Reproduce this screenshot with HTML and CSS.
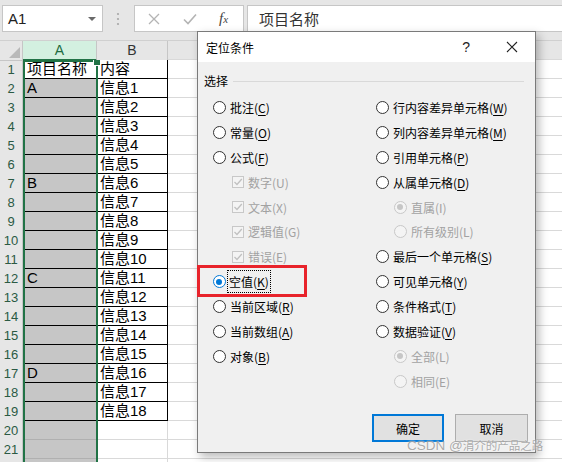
FILE: index.html
```html
<!DOCTYPE html>
<html lang="zh">
<head>
<meta charset="utf-8">
<link rel="stylesheet" href="styles.css">
</head>
<body>
<div class="app">
  <div class="topbar">
    <div class="namebox"><span class="nb-text">A1</span><span class="caret"></span></div>
    <svg class="dots" width="4" height="14" viewBox="0 0 4 14"><circle cx="2" cy="2" r="1.1" fill="#a8a8a8"/><circle cx="2" cy="7" r="1.1" fill="#a8a8a8"/><circle cx="2" cy="12" r="1.1" fill="#a8a8a8"/></svg>
    <div class="fxbtns">
      <svg class="ico" width="12" height="12" viewBox="0 0 12 12"><path d="M1 1 L11 11 M11 1 L1 11" stroke="#b4b4b4" stroke-width="1.3" fill="none"/></svg>
      <svg class="ico" width="14" height="12" viewBox="0 0 14 12"><path d="M1 6.5 L5 10.5 L13 1.5" stroke="#b4b4b4" stroke-width="1.6" fill="none"/></svg>
      <span class="fx"><i>f</i><i class="sx">x</i></span>
    </div>
    <div class="formula">项目名称</div>
  </div>

  <div class="sheet">
    <div class="row head"><div class="corner"><span class="tri"></span></div><div class="ch sel">A</div><div class="ch">B</div><div class="ch rest"></div></div>
    <div class="row"><div class="rh">1</div><div class="cell colA active lined">项目名称</div><div class="cell colB lined">内容</div><div class="cell rest"></div></div>
    <div class="row"><div class="rh">2</div><div class="cell colA lined">A</div><div class="cell colB lined">信息1</div><div class="cell rest"></div></div>
    <div class="row"><div class="rh">3</div><div class="cell colA lined"></div><div class="cell colB lined">信息2</div><div class="cell rest"></div></div>
    <div class="row"><div class="rh">4</div><div class="cell colA lined"></div><div class="cell colB lined">信息3</div><div class="cell rest"></div></div>
    <div class="row"><div class="rh">5</div><div class="cell colA lined"></div><div class="cell colB lined">信息4</div><div class="cell rest"></div></div>
    <div class="row"><div class="rh">6</div><div class="cell colA lined"></div><div class="cell colB lined">信息5</div><div class="cell rest"></div></div>
    <div class="row"><div class="rh">7</div><div class="cell colA lined">B</div><div class="cell colB lined">信息6</div><div class="cell rest"></div></div>
    <div class="row"><div class="rh">8</div><div class="cell colA lined"></div><div class="cell colB lined">信息7</div><div class="cell rest"></div></div>
    <div class="row"><div class="rh">9</div><div class="cell colA lined"></div><div class="cell colB lined">信息8</div><div class="cell rest"></div></div>
    <div class="row"><div class="rh">10</div><div class="cell colA lined"></div><div class="cell colB lined">信息9</div><div class="cell rest"></div></div>
    <div class="row"><div class="rh">11</div><div class="cell colA lined"></div><div class="cell colB lined">信息10</div><div class="cell rest"></div></div>
    <div class="row"><div class="rh">12</div><div class="cell colA lined">C</div><div class="cell colB lined">信息11</div><div class="cell rest"></div></div>
    <div class="row"><div class="rh">13</div><div class="cell colA lined"></div><div class="cell colB lined">信息12</div><div class="cell rest"></div></div>
    <div class="row"><div class="rh">14</div><div class="cell colA lined"></div><div class="cell colB lined">信息13</div><div class="cell rest"></div></div>
    <div class="row"><div class="rh">15</div><div class="cell colA lined"></div><div class="cell colB lined">信息14</div><div class="cell rest"></div></div>
    <div class="row"><div class="rh">16</div><div class="cell colA lined"></div><div class="cell colB lined">信息15</div><div class="cell rest"></div></div>
    <div class="row"><div class="rh">17</div><div class="cell colA lined">D</div><div class="cell colB lined">信息16</div><div class="cell rest"></div></div>
    <div class="row"><div class="rh">18</div><div class="cell colA lined"></div><div class="cell colB lined">信息17</div><div class="cell rest"></div></div>
    <div class="row"><div class="rh">19</div><div class="cell colA lined"></div><div class="cell colB lined">信息18</div><div class="cell rest"></div></div>
    <div class="row"><div class="rh">20</div><div class="cell colA"></div><div class="cell colB"></div><div class="cell rest"></div></div>
    <div class="row"><div class="rh">21</div><div class="cell colA"></div><div class="cell colB"></div><div class="cell rest"></div></div>
    <div class="row"><div class="rh"></div><div class="cell colA"></div><div class="cell colB"></div><div class="cell rest"></div></div>
  </div>

  <div class="selection"><span class="handle"></span></div>

  <div class="dialog">
    <div class="titlebar">
      <span class="title">定位条件</span>
      <span class="help">?</span>
      <svg class="close" width="12" height="12" viewBox="0 0 12 12"><path d="M1 1 L11 11 M11 1 L1 11" stroke="#222" stroke-width="1.1" fill="none"/></svg>
    </div>
    <div class="body">
      <div class="group"><span class="glabel">选择</span><span class="gline"></span></div>
      <div class="opts">
        <div class="col">
          <div class="opt"><span class="radio"></span><span>批注(<u>C</u>)</span></div>
          <div class="opt"><span class="radio"></span><span>常量(<u>O</u>)</span></div>
          <div class="opt"><span class="radio"></span><span>公式(<u>F</u>)</span></div>
          <div class="opt sub dis"><span class="cb"><svg width="10" height="10" viewBox="0 0 10 10"><path d="M1.5 5 L4 7.5 L8.8 2" stroke="#c0c0c0" stroke-width="1.3" fill="none"/></svg></span><span>数字(U)</span></div>
          <div class="opt sub dis"><span class="cb"><svg width="10" height="10" viewBox="0 0 10 10"><path d="M1.5 5 L4 7.5 L8.8 2" stroke="#c0c0c0" stroke-width="1.3" fill="none"/></svg></span><span>文本(X)</span></div>
          <div class="opt sub dis"><span class="cb"><svg width="10" height="10" viewBox="0 0 10 10"><path d="M1.5 5 L4 7.5 L8.8 2" stroke="#c0c0c0" stroke-width="1.3" fill="none"/></svg></span><span>逻辑值(G)</span></div>
          <div class="opt sub dis"><span class="cb"><svg width="10" height="10" viewBox="0 0 10 10"><path d="M1.5 5 L4 7.5 L8.8 2" stroke="#c0c0c0" stroke-width="1.3" fill="none"/></svg></span><span>错误(E)</span></div>
          <div class="opt"><span class="radio on"></span><span class="focus">空值(<u>K</u>)</span></div>
          <div class="opt"><span class="radio"></span><span>当前区域(<u>R</u>)</span></div>
          <div class="opt"><span class="radio"></span><span>当前数组(<u>A</u>)</span></div>
          <div class="opt"><span class="radio"></span><span>对象(<u>B</u>)</span></div>
        </div>
        <div class="col">
          <div class="opt"><span class="radio"></span><span>行内容差异单元格(<u>W</u>)</span></div>
          <div class="opt"><span class="radio"></span><span>列内容差异单元格(<u>M</u>)</span></div>
          <div class="opt"><span class="radio"></span><span>引用单元格(<u>P</u>)</span></div>
          <div class="opt"><span class="radio"></span><span>从属单元格(<u>D</u>)</span></div>
          <div class="opt rsub dis"><span class="radio dis-on"></span><span>直属(I)</span></div>
          <div class="opt rsub dis"><span class="radio dis-off"></span><span>所有级别(L)</span></div>
          <div class="opt"><span class="radio"></span><span>最后一个单元格(<u>S</u>)</span></div>
          <div class="opt"><span class="radio"></span><span>可见单元格(<u>Y</u>)</span></div>
          <div class="opt"><span class="radio"></span><span>条件格式(<u>T</u>)</span></div>
          <div class="opt"><span class="radio"></span><span>数据验证(<u>V</u>)</span></div>
          <div class="opt rsub dis"><span class="radio dis-on"></span><span>全部(L)</span></div>
          <div class="opt rsub dis"><span class="radio dis-off"></span><span>相同(E)</span></div>
        </div>
      </div>
      <div class="buttons">
        <button class="btn primary">确定</button>
        <button class="btn">取消</button>
      </div>
    </div>
  </div>

  <div class="redbox"></div>
  <div class="wm">CSDN @<span class="wm-cjk">涓介的产品之路</span></div>
</div>
</body>
</html>
```

FILE: styles.css
```css
html, body {
  margin: 0;
  padding: 0;
}
body {
  font-family: "Liberation Sans", "Noto Sans CJK SC", sans-serif;
}
.app {
  position: relative;
  width: 562px;
  height: 462px;
  overflow: hidden;
  background: #fff;
}

/* formula bar */
.topbar {
  height: 41px;
  box-sizing: border-box;
  background: #e6e6e6;
  border-bottom: 1px solid #d0d0d0;
  display: flex;
  align-items: flex-start;
  padding-top: 5px;
  padding-left: 2px;
}
.namebox {
  width: 101px;
  height: 27px;
  box-sizing: border-box;
  background: #fff;
  border: 1px solid #c6c6c6;
  display: flex;
  align-items: center;
  padding-left: 5px;
}
.nb-text {
  font: 15px "Liberation Sans", sans-serif;
  color: #222;
  flex: 1;
}
.caret {
  width: 0;
  height: 0;
  border-left: 4px solid transparent;
  border-right: 4px solid transparent;
  border-top: 4px solid #6a6a6a;
  margin-right: 6px;
}
.dots {
  margin: 7px 14px 0 13px;
}
.fxbtns {
  width: 110px;
  height: 27px;
  box-sizing: border-box;
  background: #fff;
  border: 1px solid #c6c6c6;
  display: flex;
  align-items: center;
  padding-left: 13px;
  gap: 23px;
}
.ico {
  display: block;
}
.fx {
  font-family: "Liberation Serif", serif;
  font-size: 15px;
  color: #444;
  margin-left: -1px;
}
.fx .sx {
  font-size: 11px;
}
.formula {
  flex: 1;
  height: 27px;
  box-sizing: border-box;
  margin-left: 3px;
  background: #fff;
  border: 1px solid #c6c6c6;
  border-right: none;
  padding-left: 11px;
  font: 15px/25px "Noto Sans CJK SC", sans-serif;
  color: #333;
}

/* sheet */
.sheet {
  display: flex;
  flex-direction: column;
}
.row {
  display: grid;
  grid-template-columns: 23px 74px 71px 1fr;
  height: 19px;
  flex: none;
}
.corner {
  position: relative;
  background: #e6e6e6;
  border-right: 1px solid #c6c6c6;
  border-bottom: 1px solid #c6c6c6;
  box-sizing: border-box;
}
.tri {
  position: absolute;
  right: 2px;
  bottom: 2px;
  width: 0;
  height: 0;
  border-left: 11px solid transparent;
  border-bottom: 11px solid #b9b9b9;
}
.ch {
  background: #e6e6e6;
  border-right: 1px solid #c6c6c6;
  border-bottom: 1px solid #000;
  box-sizing: border-box;
  text-align: center;
  font: 14px/18px "Liberation Sans", sans-serif;
  color: #333;
}
.ch.sel {
  background: #d3f0e0;
  color: #1e6b41;
  border-bottom: 2px solid #217346;
}
.ch.rest {
  border-right: none;
  border-bottom: 1px solid #c6c6c6;
}
.rh {
  background: #e6e6e6;
  border-right: 1px solid #c6c6c6;
  border-bottom: 1px solid #d4d4d4;
  box-sizing: border-box;
  text-align: center;
  font: 13px/19px "Liberation Sans", sans-serif;
  color: #2b5a44;
}
.cell {
  box-sizing: border-box;
  height: 19px;
  padding-left: 3px;
  font: 15px/18px "Liberation Sans", "Noto Sans CJK SC", sans-serif;
  color: #000;
  white-space: nowrap;
  overflow: hidden;
  background-color: #fff;
  box-shadow: inset -1px -1px 0 #d9d9d9;
}
.colA {
  background-color: #c6c6c6;
  box-shadow: inset 0 -1px 0 #b0b0b0;
  padding-left: 4px;
}
.colA.active {
  background-color: #fff;
}
.colA.lined {
  box-shadow: inset 0 -1px 0 #000;
}
.colB.lined {
  box-shadow: inset -1px -1px 0 #000;
}
.rest {
  box-shadow: inset 0 -1px 0 #d9d9d9;
}

.selection {
  position: absolute;
  left: 23px;
  top: 60px;
  width: 75px;
  height: 410px;
  box-sizing: border-box;
  border-left: 2px solid #217346;
  border-right: 2px solid #217346;
  border-top: 2px solid #217346;
  pointer-events: none;
}
.handle {
  position: absolute;
  right: -4px;
  top: -2px;
  width: 6px;
  height: 5px;
  background: #217346;
  border-left: 1px solid #fff;
  border-bottom: 1px solid #fff;
}

/* dialog */
.dialog {
  position: absolute;
  left: 197px;
  top: 31px;
  width: 339px;
  height: 422px;
  box-sizing: border-box;
  border: 1px solid #7a7a7a;
  background: #f0f0f0;
  box-shadow: 3px 4px 9px rgba(0, 0, 0, 0.28);
  display: flex;
  flex-direction: column;
  font: 12px "Noto Sans CJK SC", sans-serif;
  color: #000;
}
.titlebar {
  height: 30px;
  flex: none;
  background: #fff;
  display: flex;
  align-items: center;
  padding-left: 8px;
}
.title {
  font-size: 12px;
  flex: 1;
}
.help {
  font: 14px "Liberation Sans", sans-serif;
  color: #222;
  margin-right: 36px;
}
.close {
  margin-right: 17px;
}
.body {
  flex: 1;
  display: flex;
  flex-direction: column;
  padding: 11px 7px 10px 6px;
}
.group {
  display: flex;
  align-items: center;
  height: 16px;
}
.glabel {
  line-height: 16px;
  margin-right: 5px;
}
.gline {
  flex: 1;
  height: 1px;
  background: #d9d9d9;
  margin-right: 4px;
}
.opts {
  display: grid;
  grid-template-columns: 163px 1fr;
  margin-top: 6px;
  padding-left: 8.5px;
}
.col {
  display: flex;
  flex-direction: column;
}
.opt {
  height: 24.9px;
  display: flex;
  align-items: center;
  white-space: nowrap;
}
.opt u {
  text-decoration: underline;
  text-underline-offset: 2px;
}
.radio {
  width: 13px;
  height: 13px;
  box-sizing: border-box;
  border: 1px solid #333;
  border-radius: 50%;
  background: #fff;
  margin-right: 4.5px;
  flex: none;
  position: relative;
}
.radio.on {
  border-color: #0078d7;
}
.radio.on::after,
.radio.dis-on::after {
  content: "";
  position: absolute;
  left: 2.5px;
  top: 2.5px;
  width: 6px;
  height: 6px;
  border-radius: 50%;
  background: #0078d7;
}
.radio.dis-on,
.radio.dis-off {
  border-color: #c8c8c8;
  background: #f4f4f4;
}
.radio.dis-on::after {
  background: #c6c6c6;
}
.dis {
  color: #a2a2a2;
}
.sub {
  padding-left: 19.5px;
}
.rsub {
  padding-left: 18px;
}
.cb {
  width: 12px;
  height: 12px;
  box-sizing: border-box;
  border: 1px solid #c8c8c8;
  background: #f4f4f4;
  margin-right: 4px;
  display: flex;
  align-items: center;
  justify-content: center;
  flex: none;
}
.focus {
  outline: 1px dotted #000;
  outline-offset: 0;
  padding: 2px 1px;
  margin-left: -2px;
}
.buttons {
  margin-top: auto;
  display: flex;
  justify-content: flex-end;
  gap: 11px;
}
.btn {
  width: 73px;
  height: 28px;
  box-sizing: border-box;
  background: #e1e1e1;
  border: 1px solid #adadad;
  font: 12px "Noto Sans CJK SC", sans-serif;
  color: #000;
  padding: 0;
}
.btn.primary {
  width: 72px;
  border: 2px solid #0078d7;
}

.redbox {
  position: absolute;
  left: 197px;
  top: 265px;
  width: 110px;
  height: 32px;
  box-sizing: border-box;
  border: 3px solid #e8232b;
}
.wm {
  position: absolute;
  left: 407px;
  top: 437px;
  font: 13.5px "Liberation Sans", "Noto Sans CJK SC", sans-serif;
  color: rgba(150, 150, 150, 0.8);
  text-shadow: 0 0 2px rgba(255, 255, 255, 0.9);
  white-space: nowrap;
}
.wm-cjk {
  font: 11.5px "Noto Sans CJK SC", sans-serif;
}
```
